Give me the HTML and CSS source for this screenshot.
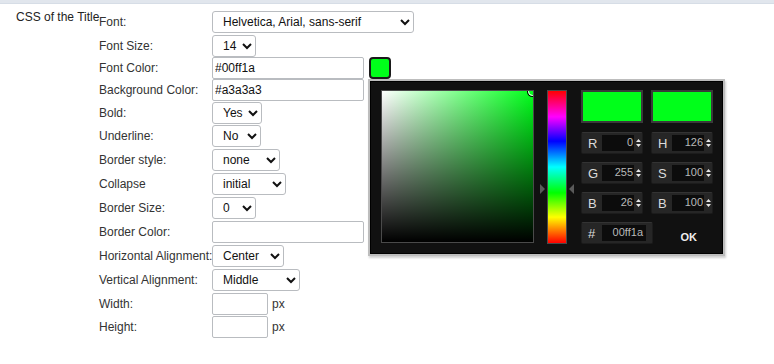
FILE: index.html
```html
<!DOCTYPE html>
<html lang="en">
<head>
	<meta charset="UTF-8">
	<title>CSS of the Title</title>
	<link rel="stylesheet" href="styles.css">
</head>
<body>
<div class="topbar"></div>

<div class="section">
	<div class="section-title">CSS of the Title</div>
	<div class="props">
		<label class="prop-label">Font:</label>
		<div class="prop-field">
			<select class="sel w-font"><option>Helvetica, Arial, sans-serif</option></select>
		</div>

		<label class="prop-label">Font Size:</label>
		<div class="prop-field">
			<select class="sel w-44"><option>14</option></select>
		</div>

		<label class="prop-label">Font Color:</label>
		<div class="prop-field">
			<input type="text" class="txt w-long" value="#00ff1a">
			<span class="swatch"></span>
		</div>

		<label class="prop-label">Background Color:</label>
		<div class="prop-field">
			<input type="text" class="txt w-long" value="#a3a3a3">
		</div>

		<label class="prop-label">Bold:</label>
		<div class="prop-field">
			<select class="sel w-50"><option>Yes</option></select>
		</div>

		<label class="prop-label">Underline:</label>
		<div class="prop-field">
			<select class="sel w-49"><option>No</option></select>
		</div>

		<label class="prop-label">Border style:</label>
		<div class="prop-field">
			<select class="sel w-68"><option>none</option></select>
		</div>

		<label class="prop-label">Collapse</label>
		<div class="prop-field">
			<select class="sel w-74"><option>initial</option></select>
		</div>

		<label class="prop-label">Border Size:</label>
		<div class="prop-field">
			<select class="sel w-44"><option>0</option></select>
		</div>

		<label class="prop-label">Border Color:</label>
		<div class="prop-field">
			<input type="text" class="txt w-long" value="">
		</div>

		<label class="prop-label">Horizontal Alignment:</label>
		<div class="prop-field">
			<select class="sel w-72"><option>Center</option></select>
		</div>

		<label class="prop-label">Vertical Alignment:</label>
		<div class="prop-field">
			<select class="sel w-88"><option>Middle</option></select>
		</div>

		<label class="prop-label">Width:</label>
		<div class="prop-field">
			<input type="text" class="txt w-short" value=""><span class="unit">px</span>
		</div>

		<label class="prop-label">Height:</label>
		<div class="prop-field">
			<input type="text" class="txt w-short" value=""><span class="unit">px</span>
		</div>
	</div>
</div>

<!-- colour picker popup, opened from the Font Color swatch -->
<div class="picker">
	<div class="pk-sv">
		<span class="pk-sv-dot"></span>
	</div>
	<div class="pk-hue-wrap">
		<svg class="pk-arrow pk-arrow-l" width="5" height="10" viewBox="0 0 5 10"><path d="M0 0L5 5L0 10Z" fill="#5a5a5a"/></svg>
		<div class="pk-hue"></div>
		<svg class="pk-arrow pk-arrow-r" width="5" height="10" viewBox="0 0 5 10"><path d="M5 0L0 5L5 10Z" fill="#5a5a5a"/></svg>
	</div>
	<div class="pk-side">
		<div class="pk-swatches">
			<span class="pk-swatch"></span>
			<span class="pk-swatch"></span>
		</div>
		<div class="pk-fields">
			<div class="pk-field"><span class="pk-key">R</span><span class="pk-val">0</span><svg class="pk-spin" width="5" height="8" viewBox="0 0 5 8"><path d="M0 3L2.5 0L5 3Z M0 5L2.5 8L5 5Z" fill="#e6e6e6"/></svg></div>
			<div class="pk-field"><span class="pk-key">H</span><span class="pk-val">126</span><svg class="pk-spin" width="5" height="8" viewBox="0 0 5 8"><path d="M0 3L2.5 0L5 3Z M0 5L2.5 8L5 5Z" fill="#e6e6e6"/></svg></div>
			<div class="pk-field"><span class="pk-key">G</span><span class="pk-val">255</span><svg class="pk-spin" width="5" height="8" viewBox="0 0 5 8"><path d="M0 3L2.5 0L5 3Z M0 5L2.5 8L5 5Z" fill="#e6e6e6"/></svg></div>
			<div class="pk-field"><span class="pk-key">S</span><span class="pk-val">100</span><svg class="pk-spin" width="5" height="8" viewBox="0 0 5 8"><path d="M0 3L2.5 0L5 3Z M0 5L2.5 8L5 5Z" fill="#e6e6e6"/></svg></div>
			<div class="pk-field"><span class="pk-key">B</span><span class="pk-val">26</span><svg class="pk-spin" width="5" height="8" viewBox="0 0 5 8"><path d="M0 3L2.5 0L5 3Z M0 5L2.5 8L5 5Z" fill="#e6e6e6"/></svg></div>
			<div class="pk-field"><span class="pk-key">B</span><span class="pk-val">100</span><svg class="pk-spin" width="5" height="8" viewBox="0 0 5 8"><path d="M0 3L2.5 0L5 3Z M0 5L2.5 8L5 5Z" fill="#e6e6e6"/></svg></div>
			<div class="pk-field pk-hex"><span class="pk-key">#</span><span class="pk-val">00ff1a</span></div>
			<div class="pk-ok">OK</div>
		</div>
	</div>
</div>
</body>
</html>
```

FILE: styles.css
```css
*{margin:0;padding:0;box-sizing:border-box;}
html,body{height:100%;}
body{
	font-family:"Liberation Sans", Arial, sans-serif;
	font-size:12px;
	color:#333;
	background:#fff;
	position:relative;
}
.topbar{
	height:4px;
	background:#e1e6ed;
	border-bottom:1px solid #d6dde6;
}
.section{
	display:flex;
	margin-top:6px;
}
.section-title{
	width:99px;
	padding-left:16px;
	white-space:nowrap;
	line-height:14px;
	color:#222;
}
.props{
	display:grid;
	grid-template-columns:113px auto;
	grid-template-rows:24px 23px 22px 22px 23px 24px 24px 24px 24px 24px 24px 24px 23px 23px;
	align-items:center;
}
.prop-label{
	white-space:nowrap;
	color:#333;
}
.prop-field{
	display:flex;
	align-items:center;
	height:100%;
}
.sel{
	height:22px;
	font-family:"Liberation Sans", Arial, sans-serif;
	font-size:12px;
	color:#111;
	background:#fff;
	border:1px solid #b9bcc0;
	border-radius:3px;
	padding-left:6px;
}
.w-font{width:202px;}
.w-44{width:44px;}
.w-49{width:49px;}
.w-50{width:50px;}
.w-68{width:68px;}
.w-72{width:72px;}
.w-74{width:74px;}
.w-88{width:88px;}
.txt{
	height:22px;
	font-family:"Liberation Sans", Arial, sans-serif;
	font-size:12px;
	color:#111;
	border:1px solid #b9bcc0;
	border-radius:2px;
	padding:0 2px;
	background:#fff;
}
.w-long{width:152px;}
.w-short{width:56px;}
.unit{margin-left:4px;color:#333;}
.swatch{
	width:22px;
	height:22px;
	margin-left:5px;
	background:#00ff1a;
	border:2px solid #1a1a1a;
	border-radius:4px;
}

/* picker */
.picker{
	position:absolute;
	left:370px;
	top:81px;
	width:353px;
	height:173px;
	display:flex;
	align-items:flex-start;
	padding:8px 0 0 10px;
	background:#111;
	border:1px solid #000;
	box-shadow:0 0 0 2px #bdbdbd, 1px 2px 2px 2px #d0d0d0;
}
.pk-sv{
	position:relative;
	width:153px;
	height:153px;
	border:1px solid #4a4a4a;
	background:
		linear-gradient(to top, #000, rgba(0,0,0,0)),
		linear-gradient(to right, #fff, #00ff1a);
	overflow:hidden;
}
.pk-sv-dot{
	position:absolute;
	right:-4px;
	top:-4px;
	width:9px;
	height:9px;
	border:1px solid #fff;
	border-radius:50%;
	box-shadow:0 0 0 1px #000;
}
.pk-hue-wrap{
	display:flex;
	align-items:center;
	height:154px;
	margin-left:6px;
	gap:2px;
}
.pk-arrow{display:block;margin-top:43px;}
.pk-hue{
	width:20px;
	height:154px;
	border:1px solid #4a4a4a;
	background:linear-gradient(to bottom, #f00 0%, #f0f 17%, #00f 33%, #0ff 50%, #0f0 67%, #ff0 83%, #f00 100%);
}
.pk-side{
	margin-left:7px;
	width:132px;
}
.pk-swatches{
	display:flex;
	justify-content:space-between;
	height:33px;
}
.pk-swatch{
	width:62px;
	height:33px;
	background:#00ff1a;
	border:2px solid #3a3a3a;
}
.pk-fields{
	display:grid;
	grid-template-columns:62px 62px;
	column-gap:8px;
	row-gap:8px;
	margin-top:9px;
}
.pk-field{
	display:flex;
	align-items:center;
	height:22px;
	background:#262626;
	border:1px solid #1c1c1c;
	border-top-color:#333;
	border-radius:2px;
	padding-left:6px;
}
.pk-key{
	width:14px;
	font-size:13px;
	color:#dcdcdc;
}
.pk-val{
	width:32px;
	height:16px;
	background:#0c0c0c;
	color:#b9b9b9;
	font-size:11px;
	text-align:right;
	line-height:14px;
	padding-right:1px;
}
.pk-spin{margin-left:2px;display:block;}
.pk-hex{width:72px;}
.pk-hex .pk-val{width:44px;padding-right:3px;}
.pk-ok{
	align-self:end;
	justify-self:end;
	margin-right:16px;
	margin-bottom:1px;
	font-weight:bold;
	font-size:11px;
	color:#eee;
}
```
